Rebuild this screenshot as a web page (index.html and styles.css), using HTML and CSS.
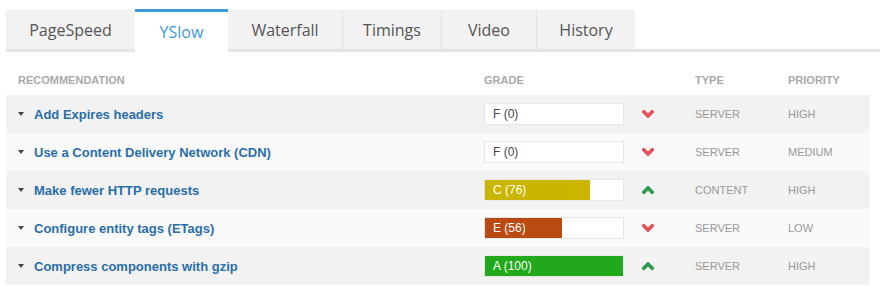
FILE: index.html
```html
<!DOCTYPE html>
<html lang="en">
<head>
  <meta charset="UTF-8">
  <title>YSlow</title>
  <link rel="stylesheet" href="styles.css">
</head>
<body>
  <div class="report">
    <ul class="tabs">
      <li class="tab">PageSpeed</li>
      <li class="tab active">YSlow</li>
      <li class="tab">Waterfall</li>
      <li class="tab">Timings</li>
      <li class="tab">Video</li>
      <li class="tab">History</li>
    </ul>

    <div class="table">
      <div class="row head">
        <div class="cell rec">Recommendation</div>
        <div class="cell">Grade</div>
        <div class="cell"></div>
        <div class="cell">Type</div>
        <div class="cell">Priority</div>
      </div>

      <div class="row">
        <div class="cell rec"><span class="caret"></span><a href="#">Add Expires headers</a></div>
        <div class="cell"><div class="grade"><div class="fill" style="width: 0%"></div><span>F (0)</span></div></div>
        <div class="cell"><svg class="trend down" viewBox="0 0 12 8"><polyline points="1.8,1.8 6,6 10.2,1.8"/></svg></div>
        <div class="cell type">Server</div>
        <div class="cell type">High</div>
      </div>

      <div class="row">
        <div class="cell rec"><span class="caret"></span><a href="#">Use a Content Delivery Network (CDN)</a></div>
        <div class="cell"><div class="grade"><div class="fill" style="width: 0%"></div><span>F (0)</span></div></div>
        <div class="cell"><svg class="trend down" viewBox="0 0 12 8"><polyline points="1.8,1.8 6,6 10.2,1.8"/></svg></div>
        <div class="cell type">Server</div>
        <div class="cell type">Medium</div>
      </div>

      <div class="row">
        <div class="cell rec"><span class="caret"></span><a href="#">Make fewer HTTP requests</a></div>
        <div class="cell"><div class="grade filled"><div class="fill grade-c" style="width: 76%"></div><span>C (76)</span></div></div>
        <div class="cell"><svg class="trend up" viewBox="0 0 12 8"><polyline points="1.8,6.2 6,2 10.2,6.2"/></svg></div>
        <div class="cell type">Content</div>
        <div class="cell type">High</div>
      </div>

      <div class="row">
        <div class="cell rec"><span class="caret"></span><a href="#">Configure entity tags (ETags)</a></div>
        <div class="cell"><div class="grade filled"><div class="fill grade-e" style="width: 56%"></div><span>E (56)</span></div></div>
        <div class="cell"><svg class="trend down" viewBox="0 0 12 8"><polyline points="1.8,1.8 6,6 10.2,1.8"/></svg></div>
        <div class="cell type">Server</div>
        <div class="cell type">Low</div>
      </div>

      <div class="row">
        <div class="cell rec"><span class="caret"></span><a href="#">Compress components with gzip</a></div>
        <div class="cell"><div class="grade filled"><div class="fill grade-a" style="width: 100%"></div><span>A (100)</span></div></div>
        <div class="cell"><svg class="trend up" viewBox="0 0 12 8"><polyline points="1.8,6.2 6,2 10.2,6.2"/></svg></div>
        <div class="cell type">Server</div>
        <div class="cell type">High</div>
      </div>
    </div>
  </div>
</body>
</html>
```

FILE: styles.css
```css
body {
  margin: 0;
  font-family: "Liberation Sans", Arial, sans-serif;
  background: white;
}
.report {
  padding: 9px 0 0 6px;
}
.tabs {
  list-style: none;
  margin: 0;
  padding: 0;
  display: flex;
  border-bottom: 3px solid #e4e4e4;
  height: 40px;
}
.tab {
  display: flex;
  align-items: center;
  justify-content: center;
  margin-top: 1px;
  height: 39px;
  background: #f2f2f2;
  border-left: 1px solid #e2e2e2;
  font-family: "Open Sans", sans-serif;
  font-size: 16px;
  color: #555;
}
.tab:first-child {
  border-left: none;
  width: 129px;
}
.tab:nth-child(2) { width: 93px; }
.tab:nth-child(3) { width: 114px; }
.tab:nth-child(4) { width: 98px; }
.tab:nth-child(5) { width: 94px; }
.tab:nth-child(6) { width: 98px; }
.tab.active {
  margin-top: 0;
  margin-bottom: -3px;
  padding-bottom: 3px;
  background: white;
  border-left: none;
  border-top: 3px solid #3d9ad8;
  box-sizing: border-box;
  height: 46px;
  color: #3d9ad8;
}
.tab.active + .tab {
  border-left: none;
}
.table {
  margin-top: 19px;
  width: 864px;
}
.row {
  display: grid;
  grid-template-columns: 478px 149px 62px 93px 1fr;
  align-items: center;
  height: 38px;
}
.row:nth-child(even) {
  background: #f2f2f2;
}
.row:nth-child(odd) {
  background: #fafafa;
}
.row.head {
  height: 24px;
  align-items: start;
  padding-top: 3px;
  box-sizing: border-box;
  background: white;
  font-size: 11px;
  font-weight: bold;
  color: #aaa;
  text-transform: uppercase;
}
.head .rec {
  padding-left: 12px;
}
.rec {
  display: flex;
  align-items: center;
  padding-left: 12px;
}
.caret {
  width: 0;
  height: 0;
  border-left: 3.5px solid transparent;
  border-right: 3.5px solid transparent;
  border-top: 4px solid #444;
  margin-right: 10px;
}
.rec a {
  color: #2a6ea8;
  font-size: 13px;
  font-weight: bold;
  text-decoration: none;
}
.grade {
  position: relative;
  width: 140px;
  height: 22px;
  box-sizing: border-box;
  background: white;
  border: 1px solid #e6e6e6;
  font-size: 12px;
  color: #444;
}
.grade .fill {
  position: absolute;
  top: 0;
  left: 0;
  bottom: 0;
}
.grade span {
  position: relative;
  line-height: 20px;
  padding-left: 8px;
}
.grade.filled span {
  color: white;
}
.grade-a { background: #22a91b; }
.grade-c { background: #cab600; }
.grade-e { background: #bb4a12; }
.trend {
  width: 12px;
  height: 8px;
  margin-left: 9px;
  margin-bottom: 1px;
  fill: none;
  stroke-width: 3.6;
  stroke-linecap: square;
}
.trend.down { stroke: #e5505f; }
.trend.up { stroke: #2b9a4e; }
.type {
  font-size: 11px;
  color: #999;
  text-transform: uppercase;
}
```
